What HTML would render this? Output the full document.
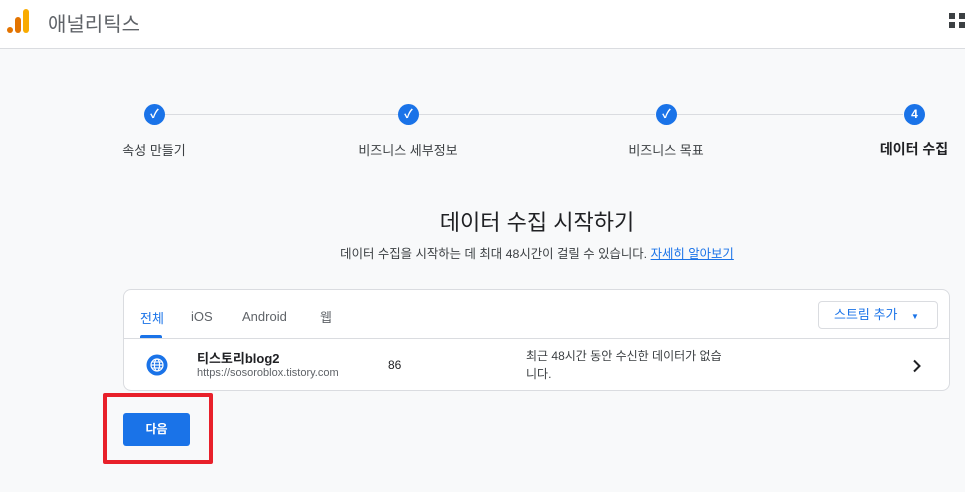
<!DOCTYPE html>
<html><head><meta charset="utf-8"><style>
*{margin:0;padding:0;box-sizing:border-box}
body{width:965px;height:492px;overflow:hidden;background:#f8f9fa;font-family:"Liberation Sans","Noto Sans CJK KR",sans-serif;color:#202124;position:relative}
.hdr{position:absolute;left:0;top:0;width:965px;height:49px;background:#fff;border-bottom:1px solid #dadce0}
.abs{position:absolute}
.circ{position:absolute;width:21px;height:21px;border-radius:50%;background:#1a73e8;color:#fff;font-size:12px;font-weight:bold;text-align:center;line-height:21px}
.lbl{position:absolute;top:140px;font-size:13px;color:#3c4043;white-space:nowrap;transform:translateX(-50%)}
.line{position:absolute;top:114px;height:1px;background:#dadce0}
</style></head><body>
<div class="hdr">
  <svg class="abs" style="left:6px;top:8px" width="26" height="26" viewBox="0 0 26 26">
    <rect x="17" y="1" width="6" height="24" rx="3" fill="#f9ab00"/>
    <rect x="9" y="9" width="6" height="16" rx="3" fill="#e37400"/>
    <circle cx="4" cy="22" r="3" fill="#e37400"/>
  </svg>
  <div class="abs" style="left:48px;top:8px;font-size:20px;color:#5f6368">애널리틱스</div>
  <svg class="abs" style="left:949px;top:13px" width="16" height="16"><rect x="0" y="0" width="6" height="6" fill="#3c4043"/><rect x="10" y="0" width="6" height="6" fill="#3c4043"/><rect x="0" y="9" width="6" height="6" fill="#3c4043"/><rect x="10" y="9" width="6" height="6" fill="#3c4043"/></svg>
</div>

<div class="line" style="left:165px;width:233px"></div>
<div class="line" style="left:419px;width:236px"></div>
<div class="line" style="left:677px;width:226px"></div>
<div class="circ" style="left:144px;top:104px">✓</div>
<div class="circ" style="left:398px;top:104px">✓</div>
<div class="circ" style="left:656px;top:104px">✓</div>
<div class="circ" style="left:904px;top:104px">4</div>
<div class="lbl" style="left:154px">속성 만들기</div>
<div class="lbl" style="left:408px">비즈니스 세부정보</div>
<div class="lbl" style="left:666px">비즈니스 목표</div>
<div class="lbl" style="left:914px;font-size:14px;font-weight:bold;color:#202124;top:139px">데이터 수집</div>

<div class="abs" style="left:0;width:1074px;top:205px;text-align:center;font-size:22px;color:#202124">데이터 수집 시작하기</div>
<div class="abs" style="left:0;width:1074px;top:244px;text-align:center;font-size:12.4px;color:#3c4043">데이터 수집을 시작하는 데 최대 48시간이 걸릴 수 있습니다. <span style="color:#1a73e8;text-decoration:underline">자세히 알아보기</span></div>

<div class="abs" style="left:123px;top:289px;width:827px;height:102px;background:#fff;border:1px solid #dadce0;border-radius:8px">
  <div class="abs" style="left:16px;top:18px;font-size:13px;color:#1a73e8">전체</div>
  <div class="abs" style="left:16px;top:45px;width:22px;height:3px;background:#1a73e8;border-radius:2px 2px 0 0"></div>
  <div class="abs" style="left:67px;top:19px;font-size:13px;color:#5f6368">iOS</div>
  <div class="abs" style="left:118px;top:19px;font-size:13px;color:#5f6368">Android</div>
  <div class="abs" style="left:196px;top:17px;font-size:13px;color:#5f6368">웹</div>
  <div class="abs" style="left:694px;top:11px;width:120px;height:28px;border:1px solid #dadce0;border-radius:4px;font-size:13px;color:#1a73e8;line-height:26px;padding-left:15px">스트림 추가 <span style="font-size:8px;margin-left:10px">▼</span></div>
  <div class="abs" style="left:0;top:48px;width:825px;height:1px;background:#dadce0"></div>
  <svg class="abs" style="left:22px;top:64px" width="22" height="22" viewBox="0 0 22 22"><circle cx="11" cy="11" r="10.5" fill="#1a73e8"/><g fill="none" stroke="#fff" stroke-width="1.2"><circle cx="11" cy="11" r="6"/><ellipse cx="11" cy="11" rx="2.6" ry="6"/><line x1="5" y1="11" x2="17" y2="11"/><line x1="6" y1="8" x2="16" y2="8"/><line x1="6" y1="14" x2="16" y2="14"/></g></svg>
  <div class="abs" style="left:73px;top:58px;font-size:13px;color:#202124;font-weight:bold">티스토리blog2</div>
  <div class="abs" style="left:73px;top:77px;font-size:11px;color:#5f6368">https://sosoroblox.tistory.com</div>
  <div class="abs" style="left:264px;top:68px;font-size:12px;color:#202124">86</div>
  <div class="abs" style="left:402px;top:57px;font-size:12px;color:#3c4043;line-height:18px;width:230px">최근 48시간 동안 수신한 데이터가 없습<br>니다.</div>
  <svg class="abs" style="left:788px;top:69px" width="10" height="14" viewBox="0 0 10 14"><path d="M2 1.5 L7.5 7 L2 12.5" fill="none" stroke="#202124" stroke-width="2"/></svg>
</div>

<div class="abs" style="left:103px;top:393px;width:110px;height:71px;border:4px solid #e8202a;border-radius:2px"></div>
<div class="abs" style="left:123px;top:413px;width:67px;height:33px;background:#1a73e8;border-radius:3px;color:#fff;font-size:12px;font-weight:bold;text-align:center;line-height:33px">다음</div>
</body></html>
